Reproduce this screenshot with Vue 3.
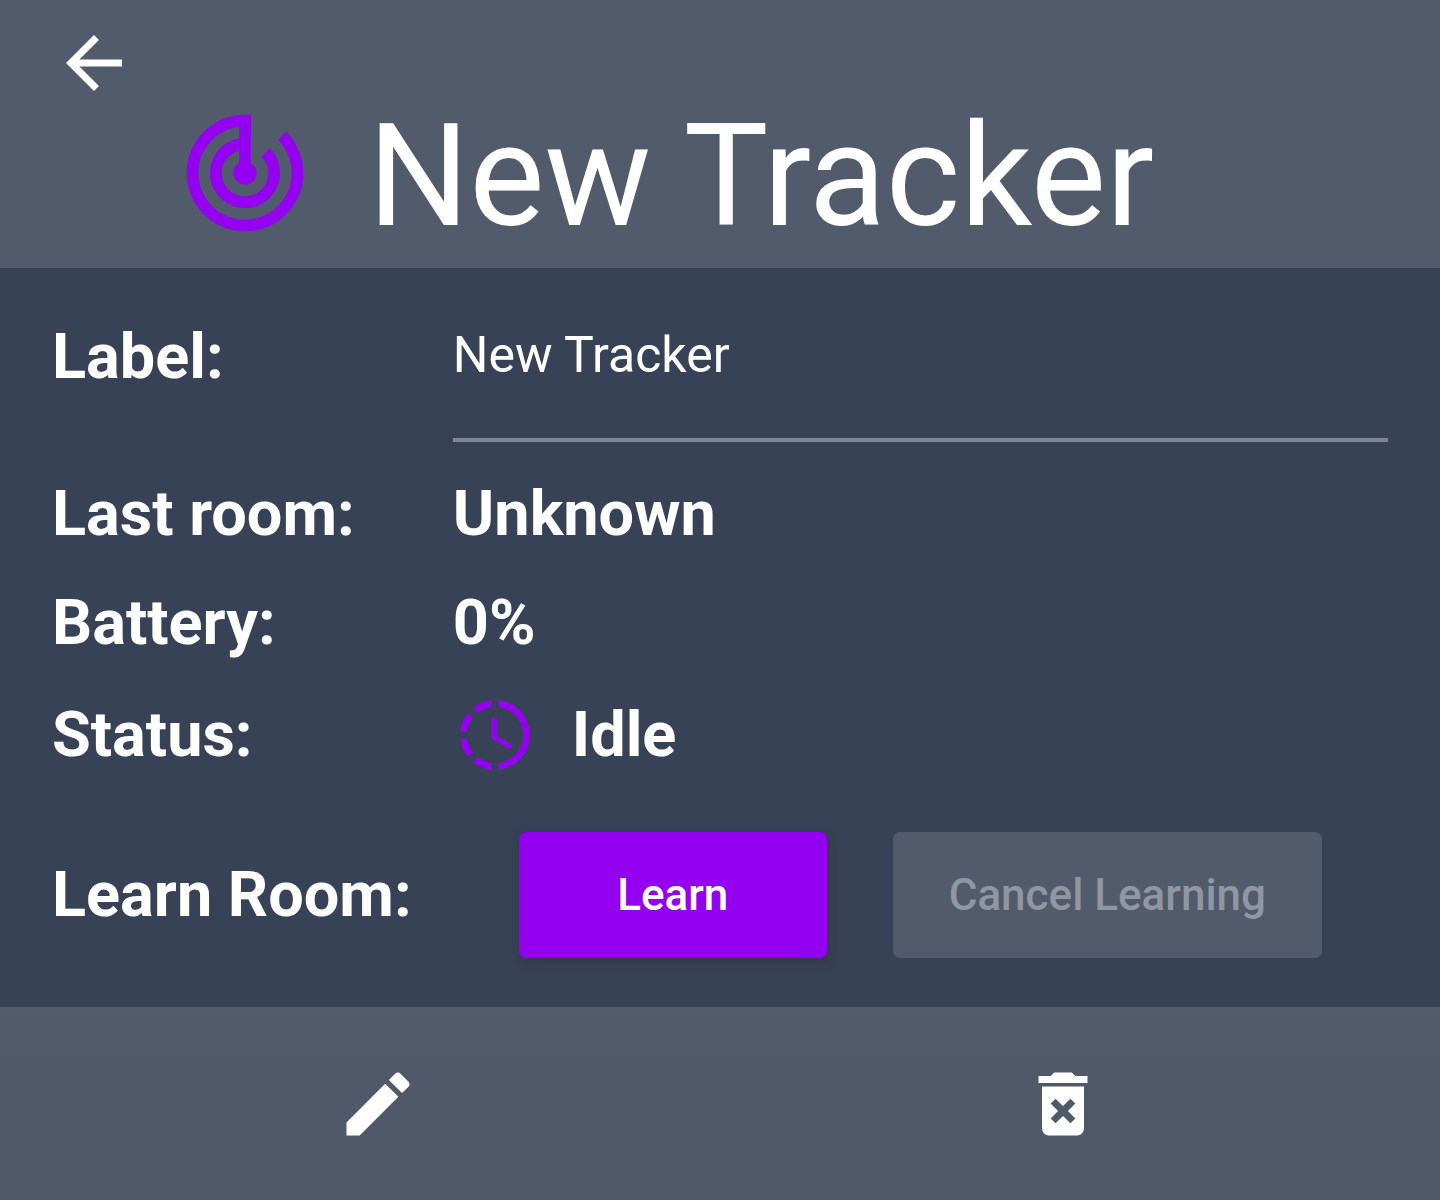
<script setup>
import { ref } from 'vue'

const label = ref('New Tracker')
</script>

<template>
  <div class="page">
    <header class="header">
      <button class="icon-button back" type="button" aria-label="Back">
        <svg class="icon" viewBox="0 0 24 24" aria-hidden="true">
          <path d="M20 11H7.83l5.59-5.59L12 4l-8 8 8 8 1.41-1.41L7.83 13H20v-2z" />
        </svg>
      </button>
      <div class="heading">
        <svg class="icon large accent" viewBox="0 0 24 24" aria-hidden="true">
          <path d="M19.07 4.93l-1.41 1.41C19.1 7.79 20 9.79 20 12c0 4.42-3.58 8-8 8s-8-3.58-8-8c0-4.08 3.05-7.44 7-7.93v2.02C8.16 6.57 6 9.03 6 12c0 3.31 2.69 6 6 6s6-2.69 6-6c0-1.66-.67-3.16-1.76-4.24l-1.41 1.41C15.55 9.9 16 10.9 16 12c0 2.21-1.79 4-4 4s-4-1.79-4-4c0-1.86 1.28-3.41 3-3.86v2.14c-.6.35-1 .98-1 1.72 0 1.1.9 2 2 2s2-.9 2-2c0-.74-.4-1.38-1-1.72V2h-1C6.48 2 2 6.48 2 12s4.48 10 10 10 10-4.48 10-10c0-2.76-1.12-5.26-2.93-7.07z" />
        </svg>
        <h1 class="title">New Tracker</h1>
      </div>
    </header>

    <main class="details">
      <div class="row field-row">
        <label class="name" for="tracker-label">Label:</label>
        <input id="tracker-label" v-model="label" class="field" type="text" />
      </div>
      <div class="row">
        <span class="name">Last room:</span>
        <span class="value">Unknown</span>
      </div>
      <div class="row">
        <span class="name">Battery:</span>
        <span class="value">0%</span>
      </div>
      <div class="row">
        <span class="name">Status:</span>
        <span class="value status">
          <svg class="icon accent" viewBox="0 0 24 24" aria-hidden="true">
            <path d="M13,2.03V2.05L13,4.05C17.39,4.59 20.5,8.58 19.96,12.97C19.5,16.61 16.64,19.5 13,19.93V21.93C18.5,21.38 22.5,16.5 21.95,11C21.5,6.25 17.73,2.5 13,2.03M11,2.06C9.05,2.25 7.19,3 5.67,4.26L7.1,5.74C8.22,4.84 9.57,4.26 11,4.06V2.06M4.26,5.67C3,7.19 2.25,9.04 2.05,11H4.05C4.24,9.58 4.8,8.23 5.69,7.1L4.26,5.67M2.06,13C2.26,14.96 3.03,16.81 4.27,18.33L5.69,16.9C4.81,15.77 4.24,14.42 4.06,13H2.06M7.1,18.37L5.67,19.74C7.18,21 9.04,21.79 11,22V20C9.58,19.82 8.23,19.25 7.1,18.37M12.5,7V12.25L17,14.92L16.25,16.15L11,13V7H12.5Z" />
          </svg>
          Idle
        </span>
      </div>
      <div class="row learn-row">
        <span class="name">Learn Room:</span>
        <div class="actions">
          <button class="button primary" type="button">Learn</button>
          <button class="button" type="button" disabled>Cancel Learning</button>
        </div>
      </div>
    </main>

    <footer class="footer">
      <button class="icon-button" type="button" aria-label="Edit">
        <svg class="icon" viewBox="0 0 24 24" aria-hidden="true">
          <path d="M20.71,7.04C21.1,6.65 21.1,6 20.71,5.63L18.37,3.29C18,2.9 17.35,2.9 16.96,3.29L15.12,5.12L18.87,8.87M3,17.25V21H6.75L17.81,9.93L14.06,6.18L3,17.25Z" />
        </svg>
      </button>
      <button class="icon-button" type="button" aria-label="Delete">
        <svg class="icon" viewBox="0 0 24 24" aria-hidden="true">
          <path d="M6,19A2,2 0 0,0 8,21H16A2,2 0 0,0 18,19V7H6V19M8.46,11.88L9.87,10.47L12,12.59L14.12,10.47L15.53,11.88L13.41,14L15.53,16.12L14.12,17.53L12,15.41L9.88,17.53L8.47,16.12L10.59,14L8.46,11.88M15.5,4L14.5,3H9.5L8.5,4H5V6H19V4H15.5Z" />
        </svg>
      </button>
    </footer>
  </div>
</template>

<style>
body {
  margin: 0;
  background: #384256;
}
</style>

<style scoped>
.page {
  display: flex;
  flex-direction: column;
  min-height: 100vh;
  color: #fff;
  background: #384256;
  font-family: Roboto, "Liberation Sans", sans-serif;
}

.header {
  padding: 21px 52px 27px;
  background: #525b6b;
}

.icon {
  display: block;
  flex: none;
  width: 84px;
  height: 84px;
  fill: currentColor;
}

.icon.large {
  width: 140px;
  height: 140px;
}

.accent {
  color: #9400f0;
}

.icon-button {
  display: block;
  padding: 0;
  border: 0;
  color: inherit;
  background: none;
  cursor: pointer;
}

.heading {
  display: flex;
  align-items: center;
  gap: 53px;
  height: 136px;
  padding-left: 123px;
}

.title {
  margin: 0;
  padding-top: 7px;
  font-size: 142px;
  font-weight: 400;
  line-height: 140px;
  white-space: nowrap;
}

.details {
  display: flex;
  flex-direction: column;
  gap: 35px;
  padding: 0 52px 49px;
}

.row {
  display: grid;
  grid-template-columns: 30% 70%;
  align-items: center;
  font-size: 63px;
  font-weight: 700;
  line-height: 74px;
  white-space: nowrap;
}

.field-row .name {
  padding-top: 4px;
}

.field {
  box-sizing: border-box;
  width: 100%;
  height: 174px;
  padding: 3px 0 0;
  border: 0;
  border-bottom: 4px solid #808693;
  outline: none;
  color: inherit;
  background: none;
  font: 400 50px/60px Roboto, "Liberation Sans", sans-serif;
}

.status {
  display: flex;
  align-items: center;
  gap: 35px;
  height: 80px;
}

.learn-row {
  margin-top: 22px;
}

.actions {
  display: flex;
  justify-content: space-evenly;
}

.button {
  height: 126px;
  padding: 0 56px;
  border: 0;
  border-radius: 7px;
  color: #9096a2;
  background: #525b6b;
  font: 500 44px/60px Roboto, "Liberation Sans", sans-serif;
}

.primary {
  min-width: 308px;
  color: #fff;
  background: #9400f0;
  box-shadow: 2px 4px 8px rgba(48, 48, 48, 0.6);
  cursor: pointer;
}

.footer {
  display: grid;
  flex: 1;
  grid-template-columns: 1fr 1fr;
  align-items: start;
  justify-items: center;
  padding: 55px 35px 0;
  background: linear-gradient(#525c6b, #505969 52px);
}
</style>
